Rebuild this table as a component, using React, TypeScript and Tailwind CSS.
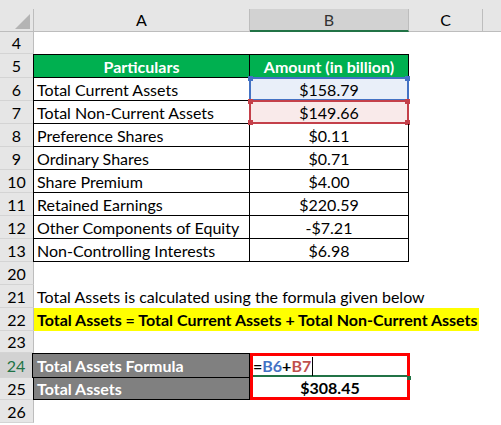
import React from "react";

const rows = [
  { n: 6, label: "Total Current Assets", value: "$158.79" },
  { n: 7, label: "Total Non-Current Assets", value: "$149.66" },
  { n: 8, label: "Preference Shares", value: "$0.11" },
  { n: 9, label: "Ordinary Shares", value: "$0.71" },
  { n: 10, label: "Share Premium", value: "$4.00" },
  { n: 11, label: "Retained Earnings", value: "$220.59" },
  { n: 12, label: "Other Components of Equity", value: "-$7.21" },
  { n: 13, label: "Non-Controlling Interests", value: "$6.98" },
];

function RowHead({ n, active }: { n: number; active?: boolean }) {
  return (
    <div
      className={
        active
          ? "flex w-[34px] shrink-0 items-center justify-center border-b border-r-2 border-b-[#d4d4d4] border-r-[#217346] bg-[#d2d2d2] pt-px text-[#217346]"
          : "flex w-[34px] shrink-0 items-center justify-center border-b border-r border-b-[#d4d4d4] border-r-[#bdbdbd] bg-[#e6e6e6] pt-px"
      }
    >
      {n}
    </div>
  );
}

function Handle({ pos, color }: { pos: string; color: string }) {
  return <span className={`absolute h-[5px] w-[5px] ${pos}`} style={{ background: color }} />;
}

export default function App() {
  return (
    <div className="h-[425px] w-[501px] overflow-hidden bg-white text-[16px] leading-none text-black [font-family:Lato,'Open_Sans',sans-serif]">
      {/* top strip */}
      <div className="h-[9px] bg-[#e6e6e6]" />

      {/* column headers */}
      <div className="flex h-[23px] border-b border-[#bdbdbd] bg-[#e6e6e6]">
        <div className="relative w-[34px] shrink-0 border-r border-[#bdbdbd]">
          <svg className="absolute left-[15px] top-[5px]" width="15" height="15" viewBox="0 0 15 15">
            <polygon points="15,0 15,15 0,15" fill="#b4b4b4" />
          </svg>
        </div>
        <div className="flex w-[216px] shrink-0 items-center justify-center border-r border-[#bdbdbd]">A</div>
        <div className="-mb-px flex w-[159px] shrink-0 items-center justify-center border-b-2 border-r border-b-[#217346] border-r-[#bdbdbd] bg-[#d2d2d2]">
          <span className="text-[#333]">B</span>
        </div>
        <div className="flex w-[74px] shrink-0 items-center justify-center border-r border-[#bdbdbd]">C</div>
        <div className="flex-1" />
      </div>

      {/* row 4 */}
      <div className="flex h-[22px]">
        <RowHead n={4} />
      </div>

      {/* row 5 header */}
      <div className="flex h-[24px]">
        <RowHead n={5} />
        <div className="-ml-px flex w-[217px] shrink-0 items-center justify-center border border-black bg-[#00b050] pt-px font-bold text-white">
          Particulars
        </div>
        <div className="-ml-px flex w-[160px] shrink-0 items-center justify-center border border-black bg-[#00b050] pt-px font-bold text-white">
          Amount (in billion)
        </div>
      </div>

      {rows.map((r) => (
        <div key={r.n} className="flex h-[23px]">
          <RowHead n={r.n} />
          <div className="-ml-px flex w-[217px] shrink-0 items-center border-b border-l border-r border-black pl-[3px] pt-px">
            {r.label}
          </div>
          <div
            className={
              "relative flex w-[159px] shrink-0 items-center justify-center border-b border-r border-black pt-px " +
              (r.n === 6 ? "bg-[#e9eff9]" : r.n === 7 ? "bg-[#f9eaea]" : "")
            }
          >
            {r.value}
            {r.n === 6 && (
              <span className="absolute -left-px -top-px bottom-[-1px] right-[-1px] border-2 border-[#4472c4]">
                <Handle pos="-left-[3px] -top-[3px]" color="#4472c4" />
                <Handle pos="-right-[3px] -top-[3px]" color="#4472c4" />
              </span>
            )}
            {r.n === 7 && (
              <span className="absolute -left-px -top-px bottom-[-1px] right-[-1px] border-2 border-[#c4404a]">
                <Handle pos="-left-[3px] -top-[3px]" color="#c4404a" />
                <Handle pos="-right-[3px] -top-[3px]" color="#c4404a" />
                <Handle pos="-left-[3px] -bottom-[3px]" color="#c4404a" />
                <Handle pos="-right-[3px] -bottom-[3px]" color="#c4404a" />
              </span>
            )}
          </div>
        </div>
      ))}

      {/* row 20 */}
      <div className="flex h-[23px]">
        <RowHead n={20} />
      </div>

      {/* row 21 */}
      <div className="flex h-[23px]">
        <RowHead n={21} />
        <div className="flex items-center whitespace-nowrap pl-[3px] pt-px">
          Total Assets is calculated using the formula given below
        </div>
      </div>

      {/* row 22 */}
      <div className="flex h-[23px]">
        <RowHead n={22} />
        <div className="flex w-[445px] shrink-0 items-center whitespace-nowrap bg-[#ffff00] pl-[3px] pt-px font-bold">
          Total Assets = Total Current Assets + Total Non-Current Assets
        </div>
      </div>

      {/* row 23 */}
      <div className="flex h-[22px]">
        <RowHead n={23} />
      </div>

      {/* rows 24-25 */}
      <div className="flex">
        <div className="flex flex-col">
          <div className="flex h-[25px]">
            <RowHead n={24} active />
            <div className="-ml-[2px] flex w-[218px] shrink-0 items-center border border-black bg-[#808080] pl-[4px] pt-px font-bold text-white">
              Total Assets Formula
            </div>
          </div>
          <div className="flex h-[22px]">
            <RowHead n={25} />
            <div className="-ml-px flex w-[217px] shrink-0 items-center border-b border-l border-r border-black bg-[#808080] pl-[3px] pt-px font-bold text-white">
              Total Assets
            </div>
          </div>
        </div>
        <div className="relative flex w-[160px] shrink-0 flex-col border-[3px] border-[#ff0000]">
          <div className="flex h-[21px] items-center border-b-2 border-[#217346] pt-px font-bold">
            <span>=</span>
            <span className="text-[#4472c4]">B6</span>
            <span>+</span>
            <span className="text-[#c0504d]">B7</span>
            <span className="ml-px h-[19px] w-px bg-black" />
          </div>
          <div className="flex flex-1 items-center justify-center pt-px font-bold">$308.45</div>
          <span className="absolute right-[-4px] top-[20px] h-[4px] w-[4px] bg-[#217346]" />
        </div>
      </div>

      {/* row 26 */}
      <div className="flex h-[23px]">
        <RowHead n={26} />
      </div>
    </div>
  );
}
